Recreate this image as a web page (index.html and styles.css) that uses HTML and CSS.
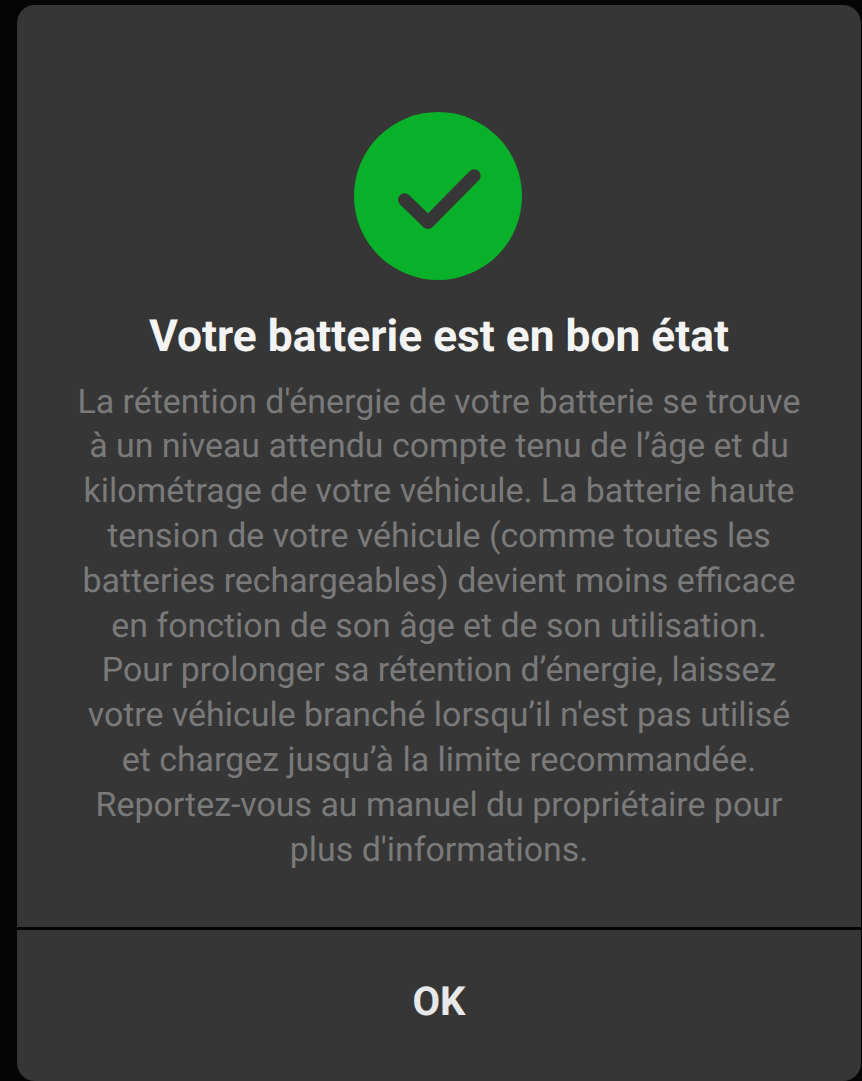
FILE: index.html
```html
<!DOCTYPE html>
<html lang="fr">
<head>
    <meta charset="UTF-8">
    <meta name="viewport" content="width=device-width, initial-scale=1.0">
    <title>Votre batterie est en bon état</title>
    <link rel="stylesheet" href="styles.css">
</head>
<body>
    <div class="dialog">
        <div class="dialog-body">
            <svg class="status-icon" width="168" height="168" viewBox="0 0 168 168">
                <circle cx="84" cy="84" r="84" fill="#09b02a"/>
                <path d="M50.5 87.8 L74 110.5 L120.2 63.8" fill="none" stroke="#363636" stroke-width="13" stroke-linecap="round" stroke-linejoin="round"/>
            </svg>
            <h1 class="dialog-title">Votre batterie est en bon état</h1>
            <p class="dialog-text">La rétention d'énergie de votre batterie se trouve<br>à un niveau attendu compte tenu de l’âge et du<br>kilométrage de votre véhicule. La batterie haute<br>tension de votre véhicule (comme toutes les<br>batteries rechargeables) devient moins efficace<br>en fonction de son âge et de son utilisation.<br>Pour prolonger sa rétention d’énergie, laissez<br>votre véhicule branché lorsqu’il n'est pas utilisé<br>et chargez jusqu’à la limite recommandée.<br>Reportez-vous au manuel du propriétaire pour<br>plus d'informations.</p>
        </div>
        <div class="dialog-action">OK</div>
    </div>
</body>
</html>
```

FILE: styles.css
```css
html, body {
    height: 100%;
}

body {
    margin: 0;
    padding: 5px 1px 0 17px;
    box-sizing: border-box;
    background-color: #050505;
    font-family: Roboto, "Liberation Sans", sans-serif;
    text-rendering: geometricPrecision;
    overflow: hidden;
}

.dialog {
    height: 100%;
    background-color: #363636;
    border-radius: 18px;
    display: flex;
    flex-direction: column;
}

.dialog-body {
    height: 922px;
    box-sizing: border-box;
    padding-top: 107px;
    display: flex;
    flex-direction: column;
    align-items: center;
}

.status-icon {
    display: block;
    margin-right: 2px;
}

.dialog-title {
    margin: 31px 0 0;
    font-size: 44.3px;
    line-height: 50px;
    font-weight: 700;
    color: #f4f4f4;
}

.dialog-text {
    margin: 19.6px 0 0;
    font-size: 33.9px;
    line-height: 44.8px;
    text-align: center;
    color: #7a7a7a;
    white-space: nowrap;
}

.dialog-action {
    border-top: 3px solid #050505;
    flex: 1;
    display: flex;
    align-items: center;
    justify-content: center;
    padding-bottom: 9px;
    font-size: 40px;
    font-weight: 700;
    color: #e8e8e8;
}
```
